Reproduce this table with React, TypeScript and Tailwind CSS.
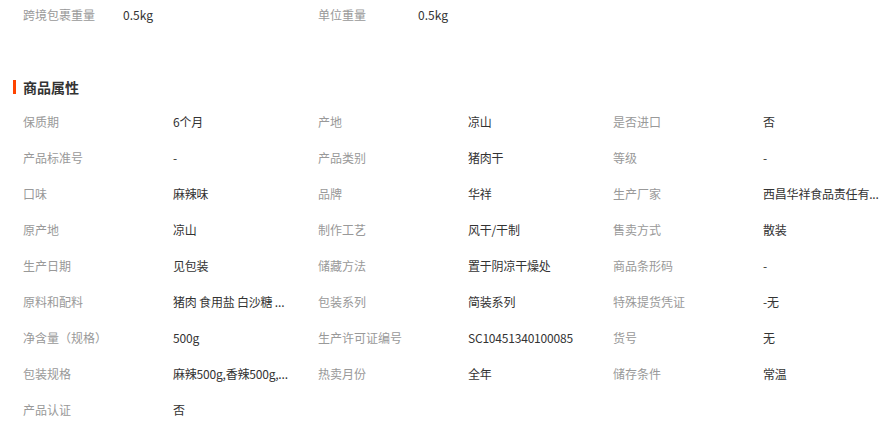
import React from 'react';

const topRow = [
  { label: '跨境包裹重量', value: '0.5kg' },
  { label: '单位重量', value: '0.5kg' },
];

const attrs = [
  ['保质期', '6个月'],
  ['产地', '凉山'],
  ['是否进口', '否'],
  ['产品标准号', '-'],
  ['产品类别', '猪肉干'],
  ['等级', '-'],
  ['口味', '麻辣味'],
  ['品牌', '华祥'],
  ['生产厂家', '西昌华祥食品责任有...'],
  ['原产地', '凉山'],
  ['制作工艺', '风干/干制'],
  ['售卖方式', '散装'],
  ['生产日期', '见包装'],
  ['储藏方法', '置于阴凉干燥处'],
  ['商品条形码', '-'],
  ['原料和配料', '猪肉 食用盐 白沙糖 ...'],
  ['包装系列', '简装系列'],
  ['特殊提货凭证', '-无'],
  ['净含量（规格）', '500g'],
  ['生产许可证编号', 'SC10451340100085'],
  ['货号', '无'],
  ['包装规格', '麻辣500g,香辣500g,...'],
  ['热卖月份', '全年'],
  ['储存条件', '常温'],
  ['产品认证', '否'],
];

export default function App() {
  return (
    <div
      className="w-[889px] h-[423px] bg-white overflow-hidden text-[12px] text-[#333]"
      style={{ fontFamily: '"Noto Sans CJK SC", "Noto Sans", sans-serif' }}
    >
      {/* Logistics weights */}
      <div className="flex pt-[6px] pl-[23px]">
        {topRow.map((item) => (
          <div key={item.label} className="flex w-[295px] h-[18px] items-center">
            <span className="w-[100px] text-[#999]">{item.label}</span>
            <span>{item.value}</span>
          </div>
        ))}
      </div>

      {/* Section header */}
      <div className="flex items-center mt-[53px] pl-[13px] h-[20px]">
        <span className="w-[3px] h-[14px] bg-[#ff4400] mr-[7px]" />
        <span className="text-[14px] font-bold text-[#333]">商品属性</span>
      </div>

      {/* Attributes */}
      <div className="grid grid-cols-[295px_295px_295px] mt-[7px] pl-[23px]">
        {attrs.map(([label, value]) => (
          <div key={label} className="flex h-[36px] items-center">
            <span className="w-[150px] shrink-0 text-[#999]">{label}</span>
            <span className="whitespace-nowrap tracking-[-0.2px]">{value}</span>
          </div>
        ))}
      </div>
    </div>
  );
}
